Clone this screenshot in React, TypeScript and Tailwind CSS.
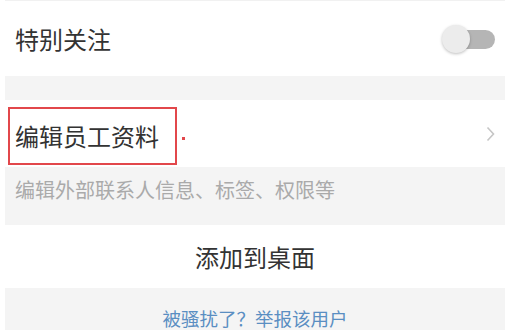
export default function App() {
  return (
    <div
      className="w-[510px] h-[330px] overflow-hidden bg-white px-[5px]"
      style={{ fontFamily: '"Noto Sans CJK SC", "Noto Sans", sans-serif' }}
    >
      {/* 特别关注 */}
      <div className="flex h-[76px] items-center justify-between border-t border-[#f1f1f1] pl-[10px] pr-[10px]">
        <span className="text-[24px] leading-[32px] text-[#333333]">特别关注</span>
        <div className="relative h-[28px] w-[53px]">
          <div className="absolute right-0 top-[5px] h-[19px] w-[40px] rounded-full bg-[#b5b5b5]" />
          <div className="absolute left-0 top-0 h-[28px] w-[28px] rounded-full bg-[#ececec] shadow-[0_1px_3px_rgba(0,0,0,0.25)]" />
        </div>
      </div>

      <div className="h-[24px] bg-[#f4f4f4]" />

      {/* 编辑员工资料 */}
      <div className="flex h-[67px] items-start pr-[10px]">
        <div className="ml-[3px] mt-[7px] flex h-[58px] items-center border-2 border-[#e2474b] pl-[5px] pr-[16px]">
          <span className="text-[24px] leading-[32px] text-[#333333]">编辑员工资料</span>
        </div>
        <div className="ml-[5px] mt-[37px] h-[3px] w-[3px] bg-[#e2474b]" />
        <svg
          className="ml-auto mt-[26px]"
          width="9"
          height="16"
          viewBox="0 0 9 16"
          fill="none"
        >
          <path d="M1.5 1.5 L7.5 8 L1.5 14.5" stroke="#c6c6c6" strokeWidth="1.6" />
        </svg>
      </div>

      <div className="h-[58px] bg-[#f4f4f4] pl-[10px] pt-[9px]">
        <span className="text-[20px] leading-[28px] text-[#aaaaaa]">
          编辑外部联系人信息、标签、权限等
        </span>
      </div>

      {/* 添加到桌面 */}
      <div className="flex h-[63px] items-center justify-center">
        <span className="text-[24px] leading-[32px] text-[#333333]">添加到桌面</span>
      </div>

      <div className="flex h-[42px] justify-center bg-[#f4f4f4] pt-[18px]">
        <span className="text-[18.5px] leading-[24px] text-[#5a8ec2]">被骚扰了？举报该用户</span>
      </div>
    </div>
  );
}
